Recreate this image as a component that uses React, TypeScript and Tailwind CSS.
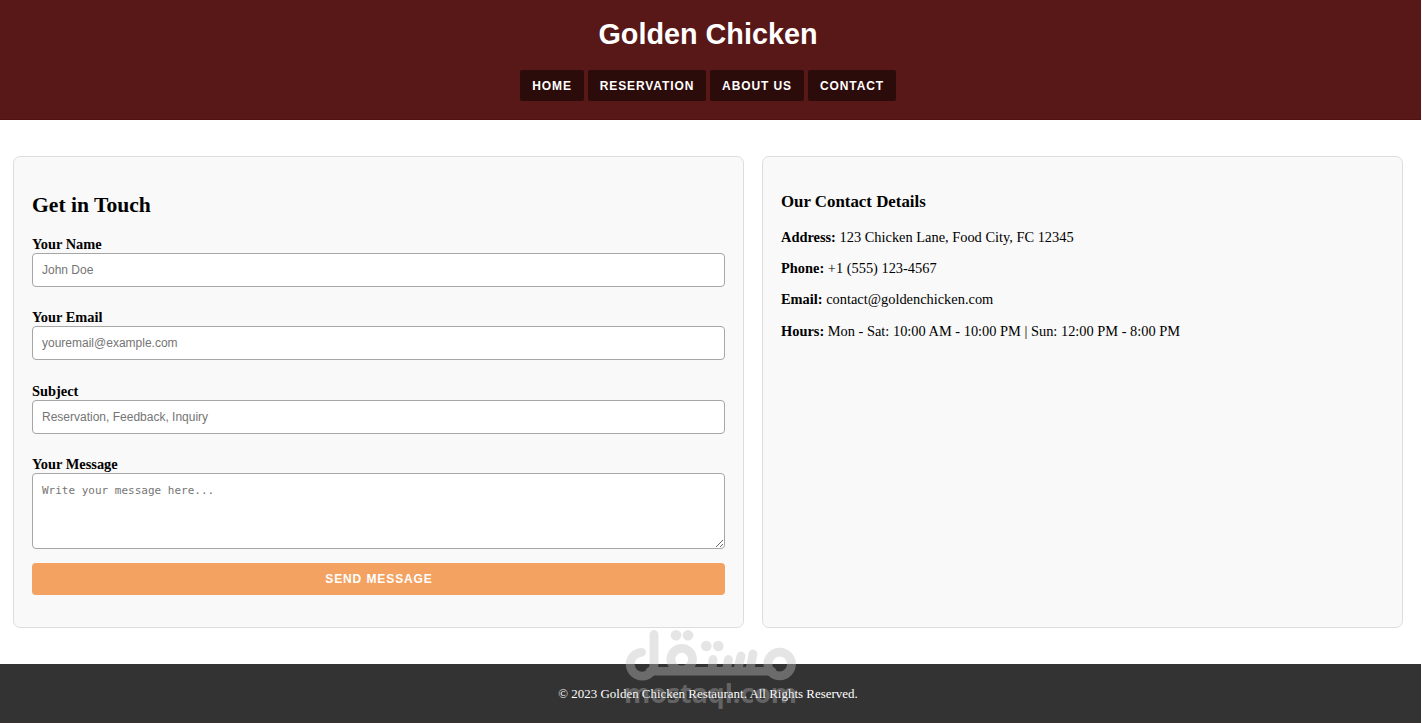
import { FormEvent } from "react";

const navLinks = [
  { name: "Home", width: "w-16" },
  { name: "Reservation", width: "w-[118px]" },
  { name: "About Us", width: "w-[94px]" },
  { name: "Contact", width: "w-[88px]" },
];

const fields = [
  { id: "name", label: "Your Name", type: "text", placeholder: "John Doe", spacing: "mb-[22px]" },
  { id: "email", label: "Your Email", type: "email", placeholder: "youremail@example.com", spacing: "mb-[23px]" },
  { id: "subject", label: "Subject", type: "text", placeholder: "Reservation, Feedback, Inquiry", spacing: "mb-[22px]" },
];

const details = [
  { label: "Address:", value: "123 Chicken Lane, Food City, FC 12345" },
  { label: "Phone:", value: "+1 (555) 123-4567" },
  { label: "Email:", value: "contact@goldenchicken.com" },
  { label: "Hours:", value: "Mon - Sat: 10:00 AM - 10:00 PM | Sun: 12:00 PM - 8:00 PM" },
];

function Header() {
  return (
    <header className="flex h-[120px] flex-col items-center border-b border-[#4f1212] bg-[#581818] pr-[5px] pt-[18px]">
      <h1 className="font-['Liberation_Sans',sans-serif] text-[28.8px] font-bold leading-[33px] text-white">
        Golden Chicken
      </h1>
      <nav className="mt-[19px] flex gap-1">
        {navLinks.map((link) => (
          <a
            key={link.name}
            href="#"
            className={`flex h-[31px] items-center justify-center whitespace-nowrap rounded-[2px] bg-[#2c0b0b] pt-px font-['Liberation_Sans',sans-serif] text-[12px] font-bold uppercase tracking-[0.9px] text-white ${link.width}`}
          >
            {link.name}
          </a>
        ))}
      </nav>
    </header>
  );
}

function ContactForm() {
  const handleSubmit = (e: FormEvent) => e.preventDefault();

  return (
    <section className="h-[472px] w-[731px] rounded-[7px] border border-[#ddd] bg-[#f9f9f9] px-[18px] pt-9">
      <h2 className="text-[21.6px] font-bold leading-[25px]">Get in Touch</h2>
      <form onSubmit={handleSubmit} className="mt-[18px] flex flex-col">
        {fields.map((field) => (
          <div key={field.id} className={`flex flex-col ${field.spacing}`}>
            <label htmlFor={field.id} className="text-[14.4px] font-bold leading-[17px]">
              {field.label}
            </label>
            <input
              id={field.id}
              type={field.type}
              placeholder={field.placeholder}
              className="h-[34px] rounded-[4px] border border-[#a6a6a6] bg-white px-[9px] font-['Liberation_Sans',sans-serif] text-[12px] placeholder:text-[#757575]"
            />
          </div>
        ))}
        <label htmlFor="message" className="text-[14.4px] font-bold leading-[17px]">
          Your Message
        </label>
        <textarea
          id="message"
          placeholder="Write your message here..."
          className="h-[76px] resize rounded-[4px] border border-[#a6a6a6] bg-white px-[9px] py-[10px] font-['DejaVu_Sans_Mono',monospace] text-[11px] leading-[14px] placeholder:text-[#757575]"
        />
        <button
          type="submit"
          className="mt-[14px] h-8 rounded-[4px] bg-[#f4a261] pl-px font-['Liberation_Sans',sans-serif] text-[12px] font-bold uppercase tracking-[0.9px] text-white"
        >
          Send Message
        </button>
      </form>
    </section>
  );
}

function ContactDetails() {
  return (
    <section className="h-[472px] w-[641px] rounded-[7px] border border-[#ddd] bg-[#f9f9f9] px-[18px] pt-[35px]">
      <h3 className="text-[16.85px] font-bold leading-[20px]">Our Contact Details</h3>
      <div className="mt-[17px] flex flex-col gap-[14.2px]">
        {details.map((item) => (
          <p key={item.label} className="text-[14.4px] leading-[17px]">
            <strong>{item.label}</strong> {item.value}
          </p>
        ))}
      </div>
    </section>
  );
}

function Watermark() {
  return (
    <svg
      className="pointer-events-none absolute left-[620px] top-[625px]"
      width="180"
      height="90"
      viewBox="620 625 180 90"
      aria-hidden="true"
    >
      <g opacity="0.4" fill="none" stroke="#c0c0c0" strokeLinecap="round" strokeLinejoin="round">
        <g strokeWidth="8.8">
          <path d="M641.5 652.3a11.9 11.9 0 1 0 12.5 11.7V634.5" />
          <path d="M650 671.3H772" strokeWidth="8.4" />
          <circle cx="681.7" cy="659.2" r="10.8" />
          <circle cx="779.7" cy="664" r="11.8" />
          <path d="M713 659.5l-1 10M728.5 659.5l-2 10M741 656l-3 13M753 654l-3 15" />
        </g>
        <g fill="#c0c0c0" stroke="none">
          <circle cx="676" cy="635.3" r="5.3" />
          <circle cx="688" cy="635.3" r="5.3" />
          <circle cx="706.3" cy="646" r="5.3" />
          <circle cx="718.3" cy="646" r="5.3" />
          <text
            x="624"
            y="702.5"
            textLength="173"
            lengthAdjust="spacingAndGlyphs"
            opacity="0.85"
            className="font-['Open_Sans',sans-serif] text-[27px] font-bold"
          >
            mostaql.com
          </text>
        </g>
      </g>
    </svg>
  );
}

export default function App() {
  return (
    <div className="relative h-[723px] overflow-hidden bg-white pr-px font-['Liberation_Serif',serif] text-black">
      <Header />
      <main className="flex h-[544px] gap-[18px] pl-[13px] pt-9">
        <ContactForm />
        <ContactDetails />
      </main>
      <footer className="flex h-[59px] justify-center border-b border-[#3a2f31] bg-[#333] pr-[5px] pt-[22px]">
        <p className="text-[12.96px] leading-[15px] text-white">
          © 2023 Golden Chicken Restaurant. All Rights Reserved.
        </p>
      </footer>
      <Watermark />
    </div>
  );
}
